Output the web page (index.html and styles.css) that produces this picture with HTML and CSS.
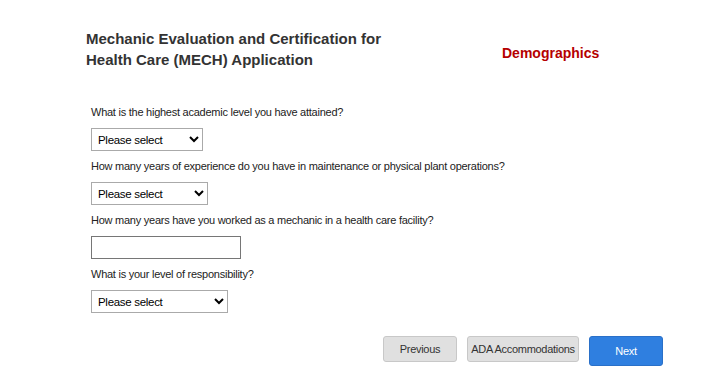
FILE: index.html
```html
<!DOCTYPE html>
<html lang="en">
<head>
    <meta charset="UTF-8">
    <meta name="viewport" content="width=device-width, initial-scale=1.0">
    <title>MECH Application - Demographics</title>
    <link rel="stylesheet" href="styles.css">
</head>
<body>
    <div class="page">
        <div class="header">
            <h1 class="app-title">Mechanic Evaluation and Certification for<br>Health Care (MECH) Application</h1>
            <div class="section-name">Demographics</div>
        </div>
        <form class="form">
            <div class="field">
                <label for="education">What is the highest academic level you have attained?</label>
                <select id="education" class="select-sm">
                    <option>Please select</option>
                </select>
            </div>
            <div class="field">
                <label for="experience">How many years of experience do you have in maintenance or physical plant operations?</label>
                <select id="experience" class="select-md">
                    <option>Please select</option>
                </select>
            </div>
            <div class="field">
                <label for="years">How many years have you worked as a mechanic in a health care facility?</label>
                <input type="text" id="years" class="text-input">
            </div>
            <div class="field">
                <label for="responsibility">What is your level of responsibility?</label>
                <select id="responsibility" class="select-lg">
                    <option>Please select</option>
                </select>
            </div>
        </form>
        <div class="actions">
            <button class="btn btn-gray btn-prev">Previous</button>
            <button class="btn btn-gray btn-ada">ADA Accommodations</button>
            <button class="btn btn-blue">Next</button>
        </div>
    </div>
</body>
</html>
```

FILE: styles.css
```css
body {
    margin: 0;
    background-color: #fff;
    font-family: "Liberation Sans", Arial, sans-serif;
    color: #222;
}
.page {
    width: 719px;
    height: 383px;
    box-sizing: border-box;
    padding: 28px 56px 0 86px;
}
.header {
    display: flex;
    align-items: flex-start;
}
.app-title {
    margin: 0;
    width: 416px;
    font-size: 15px;
    line-height: 21px;
    font-weight: bold;
    color: #333;
}
.section-name {
    margin-top: 17px;
    font-size: 14px;
    font-weight: bold;
    color: #b50000;
}
.form {
    margin-top: 35px;
    padding-left: 5px;
}
.field {
    display: flex;
    flex-direction: column;
    align-items: flex-start;
    margin-bottom: 8px;
}
.field label {
    font-size: 11px;
    line-height: 14px;
    letter-spacing: -0.25px;
    margin-bottom: 9px;
}
select {
    height: 23px;
    font-family: "Liberation Sans", Arial, sans-serif;
    font-size: 11.5px;
    letter-spacing: -0.3px;
    color: #000;
    background-color: #fff;
    border: 1px solid #aaa;
    padding: 0 2px;
}
.select-sm {
    width: 112px;
}
.select-md {
    width: 117px;
}
.select-lg {
    width: 137px;
}
.text-input {
    width: 150px;
    height: 23px;
    box-sizing: border-box;
    border: 1px solid #767676;
}
.actions {
    display: flex;
    justify-content: flex-end;
    align-items: flex-start;
    gap: 10px;
    margin-top: 23px;
}
.btn {
    height: 26px;
    padding: 0;
    border-radius: 3px;
    font-family: "Liberation Sans", Arial, sans-serif;
    font-size: 11px;
    letter-spacing: -0.3px;
    cursor: pointer;
}
.btn-gray {
    background-color: #e0e0e0;
    border: 1px solid #c8c8c8;
    color: #333;
}
.btn-prev {
    width: 74px;
}
.btn-ada {
    width: 112px;
}
.btn-blue {
    width: 74px;
    height: 30px;
    background-color: #2f7fe0;
    border: 1px solid #2a70c8;
    color: #fff;
}
```
